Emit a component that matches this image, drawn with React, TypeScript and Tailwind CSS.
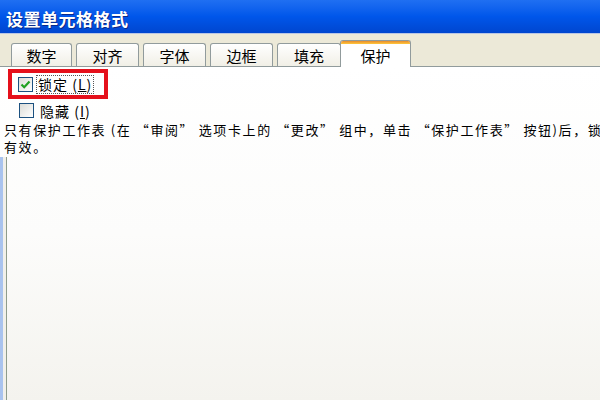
import React from 'react';

const tabs = [
  { label: '数字', w: 'w-[61px]' },
  { label: '对齐', w: 'w-[63px]' },
  { label: '字体', w: 'w-[63px]' },
  { label: '边框', w: 'w-[63px]' },
  { label: '填充', w: 'w-[64px]' },
];

const Checkbox: React.FC<{ checked?: boolean }> = ({ checked }) => (
  <div className="w-[15px] h-[15px] border border-[#1c5180] bg-gradient-to-br from-[#dcdcd7] to-white flex items-center justify-center shrink-0">
    {checked && (
      <svg width="11" height="11" viewBox="0 0 11 11">
        <path d="M1.5 5.5 L4.2 8.2 L9.5 2.5" fill="none" stroke="#21a121" strokeWidth="2.2" />
      </svg>
    )}
  </div>
);

export default function App() {
  return (
    <div
      lang="zh-CN"
      className="w-[600px] h-[400px] flex flex-col overflow-hidden bg-[#ece9d8] text-black"
      style={{ fontFamily: '"Noto Sans CJK SC", "Noto Sans", sans-serif' }}
    >
      {/* title bar */}
      <div className="h-[33px] shrink-0 flex items-center pl-[6px] pt-[3px] bg-gradient-to-b from-[#1f6ff2] via-[#0056ea] to-[#0046cf]">
        <span className="text-white font-bold text-[17px] leading-none tracking-[0.5px] [text-shadow:1px_1px_0_#0a2a8a]">
          设置单元格格式
        </span>
      </div>
      <div className="h-px shrink-0 bg-[#b9c6e4]" />

      {/* tab strip */}
      <div className="h-[32px] shrink-0 flex items-end pl-[11px] gap-[4px] relative z-10">
        {tabs.map((t) => (
          <div
            key={t.label}
            className={`${t.w} h-[23px] flex items-center justify-center text-[15px] leading-none rounded-t-[3px] border border-b-0 border-[#919b9c] bg-gradient-to-b from-white to-[#f1efe6]`}
          >
            {t.label}
          </div>
        ))}
        <div className="w-[71px] h-[27px] -ml-[5px] -mb-px flex flex-col rounded-t-[3px] border border-b-0 border-[#919b9c] bg-white overflow-hidden">
          <div className="h-[3px] shrink-0 bg-gradient-to-b from-[#e68b2c] to-[#ffc83c]" />
          <div className="flex-1 flex items-center justify-center text-[15px] leading-none">保护</div>
        </div>
      </div>

      {/* panel */}
      <div className="flex-1 flex flex-col border-t border-[#919b9c] bg-gradient-to-b from-white via-[#fcfcfb] to-[#f4f3ee]">
        <div className="ml-[8px] mt-[2px] w-[100px] h-[30px] border-4 border-[#e5101b] flex items-center pl-[6px] gap-[3px]">
          <Checkbox checked />
          <span className="px-px border border-dotted border-[#555] text-[14px] tracking-[1px] leading-[17px] whitespace-nowrap">
            锁定 (<u>L</u>)
          </span>
        </div>
        <div className="flex items-center ml-[19px] mt-[4px] gap-[6px] h-[15px]">
          <Checkbox />
          <span className="text-[14px] tracking-[1px] leading-none whitespace-nowrap">
            隐藏 (<u>I</u>)
          </span>
        </div>
        <div className="mt-[3px] pl-[4px] text-[13px] tracking-[1.6px] leading-[17px] whitespace-nowrap overflow-hidden">
          <p>只有保护工作表 (在 “审阅” 选项卡上的 “更改” 组中，单击 “保护工作表” 按钮)后，锁</p>
          <p>有效。</p>
        </div>
        <div className="flex-1 flex mt-[2px]">
          <div className="w-[3px] bg-[#a9c3ee]" />
          <div className="w-[3px] bg-[#f1f0ea]" />
          <div className="w-px bg-[#8e9c8c]" />
          <div className="flex-1" />
        </div>
      </div>
    </div>
  );
}
